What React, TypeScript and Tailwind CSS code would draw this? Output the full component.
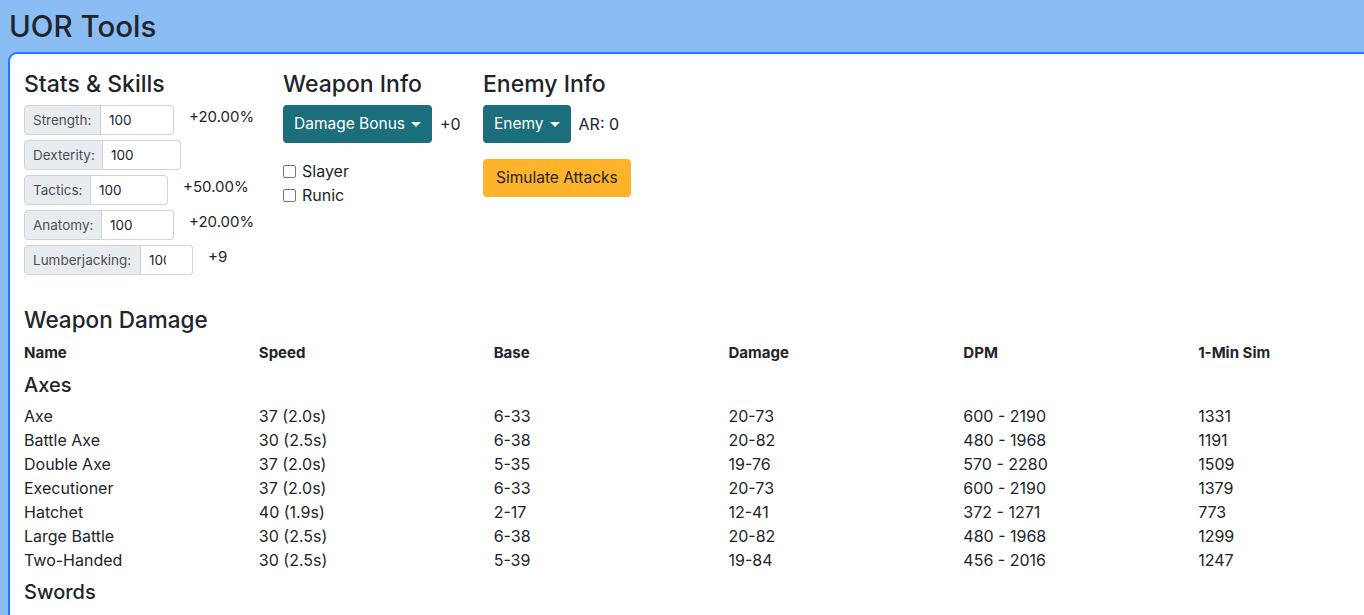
import React from 'react';

const stats = [
  { label: 'Strength:', lw: 'w-[77px]', iw: 'w-[73px] pr-[8px]', bonus: '+20.00%' },
  { label: 'Dexterity:', lw: 'w-[79px]', iw: 'w-[78px] pr-[8px]', bonus: '' },
  { label: 'Tactics:', lw: 'w-[67px]', iw: 'w-[77px] pr-[8px]', bonus: '+50.00%' },
  { label: 'Anatomy:', lw: 'w-[78px]', iw: 'w-[72px] pr-[8px]', bonus: '+20.00%' },
  { label: 'Lumberjacking:', lw: 'w-[117px]', iw: 'w-[52px] pr-[26px]', bonus: '+9' },
];

const axes = [
  ['Axe', '37 (2.0s)', '6-33', '20-73', '600 - 2190', '1331'],
  ['Battle Axe', '30 (2.5s)', '6-38', '20-82', '480 - 1968', '1191'],
  ['Double Axe', '37 (2.0s)', '5-35', '19-76', '570 - 2280', '1509'],
  ['Executioner', '37 (2.0s)', '6-33', '20-73', '600 - 2190', '1379'],
  ['Hatchet', '40 (1.9s)', '2-17', '12-41', '372 - 1271', '773'],
  ['Large Battle', '30 (2.5s)', '6-38', '20-82', '480 - 1968', '1299'],
  ['Two-Handed', '30 (2.5s)', '5-39', '19-84', '456 - 2016', '1247'],
];

const Caret = () => (
  <span className="ml-[6px] inline-block h-0 w-0 border-x-[5px] border-t-[5px] border-x-transparent border-t-white align-middle" />
);

const GroupRows = ({ title, rows }: { title: string; rows: string[][] }) => (
  <>
    <div className="col-span-6 pt-[8px] pb-[7px] text-[20px] font-medium leading-[24px]">{title}</div>
    {rows.map((r) =>
      r.map((c, i) => (
        <div key={r[0] + i} className="h-[24px] text-[16px] leading-[24px]">
          {c}
        </div>
      ))
    )}
  </>
);

const App = () => {
  return (
    <div className="h-screen overflow-hidden bg-[#89bdf3] font-['Inter',sans-serif] text-[#212529]">
      <h1 className="h-[52px] pl-[9px] pt-[7px] text-[29.5px] font-medium leading-[38px]">UOR Tools</h1>

      <div className="ml-[8px] min-h-[600px] w-[1450px] rounded-tl-[9px] border-2 border-[#1a7cff] bg-white px-[14px] pt-[16px]">
        <div className="flex">
          <section className="w-[259px]">
            <h4 className="mb-[6px] text-[23px] font-medium leading-[29px]">Stats &amp; Skills</h4>
            <div className="flex flex-col gap-[5px]">
              {stats.map((s) => (
                <div key={s.label} className="flex items-start">
                  <div className="flex h-[30px]">
                    <span
                      className={`${s.lw} flex items-center rounded-l-[4px] border border-[#ced4da] bg-[#e9ecef] px-[8px] text-[13.5px] text-[#495057]`}
                    >
                      {s.label}
                    </span>
                    <input
                      readOnly
                      value="100"
                      className={`${s.iw} rounded-r-[4px] border border-l-0 border-[#ced4da] bg-white pl-[8px] text-[13.5px] text-[#212529] outline-none`}
                    />
                  </div>
                  {s.bonus && <span className="ml-[15px] text-[15px] leading-[24px]">{s.bonus}</span>}
                </div>
              ))}
            </div>
          </section>

          <section className="w-[200px]">
            <h4 className="mb-[6px] text-[23px] font-medium leading-[29px]">Weapon Info</h4>
            <div className="flex items-center">
              <button className="flex h-[38px] items-center rounded-[4px] bg-[#1b6e7c] px-[11px] text-[15.5px] text-white">
                Damage Bonus
                <Caret />
              </button>
              <span className="ml-[8px] text-[16px]">+0</span>
            </div>
            <div className="mt-[16px] flex flex-col">
              {['Slayer', 'Runic'].map((l) => (
                <label key={l} className="flex h-[24px] items-center text-[16px]">
                  <span className="mr-[6px] inline-block h-[13px] w-[13px] rounded-[2px] border border-[#767676] bg-white" />
                  {l}
                </label>
              ))}
            </div>
          </section>

          <section>
            <h4 className="mb-[6px] text-[23px] font-medium leading-[29px]">Enemy Info</h4>
            <div className="flex items-center">
              <button className="flex h-[38px] items-center rounded-[4px] bg-[#1b6e7c] px-[11px] text-[15.5px] text-white">
                Enemy
                <Caret />
              </button>
              <span className="ml-[8px] text-[16px]">AR: 0</span>
            </div>
            <button className="mt-[16px] h-[38px] rounded-[4px] bg-[#fdb42b] px-[13px] text-[15.5px] text-[#212529]">
              Simulate Attacks
            </button>
          </section>
        </div>

        <h4 className="mt-[30px] mb-[7px] text-[22.5px] font-medium leading-[29px]">Weapon Damage</h4>
        <div className="grid w-[1409px] grid-cols-6">
          {['Name', 'Speed', 'Base', 'Damage', 'DPM', '1-Min Sim'].map((h) => (
            <div key={h} className="h-[24px] text-[15px] font-bold leading-[24px]">
              {h}
            </div>
          ))}
          <GroupRows title="Axes" rows={axes} />
          <GroupRows title="Swords" rows={[]} />
        </div>
      </div>
    </div>
  );
};

export default App;
